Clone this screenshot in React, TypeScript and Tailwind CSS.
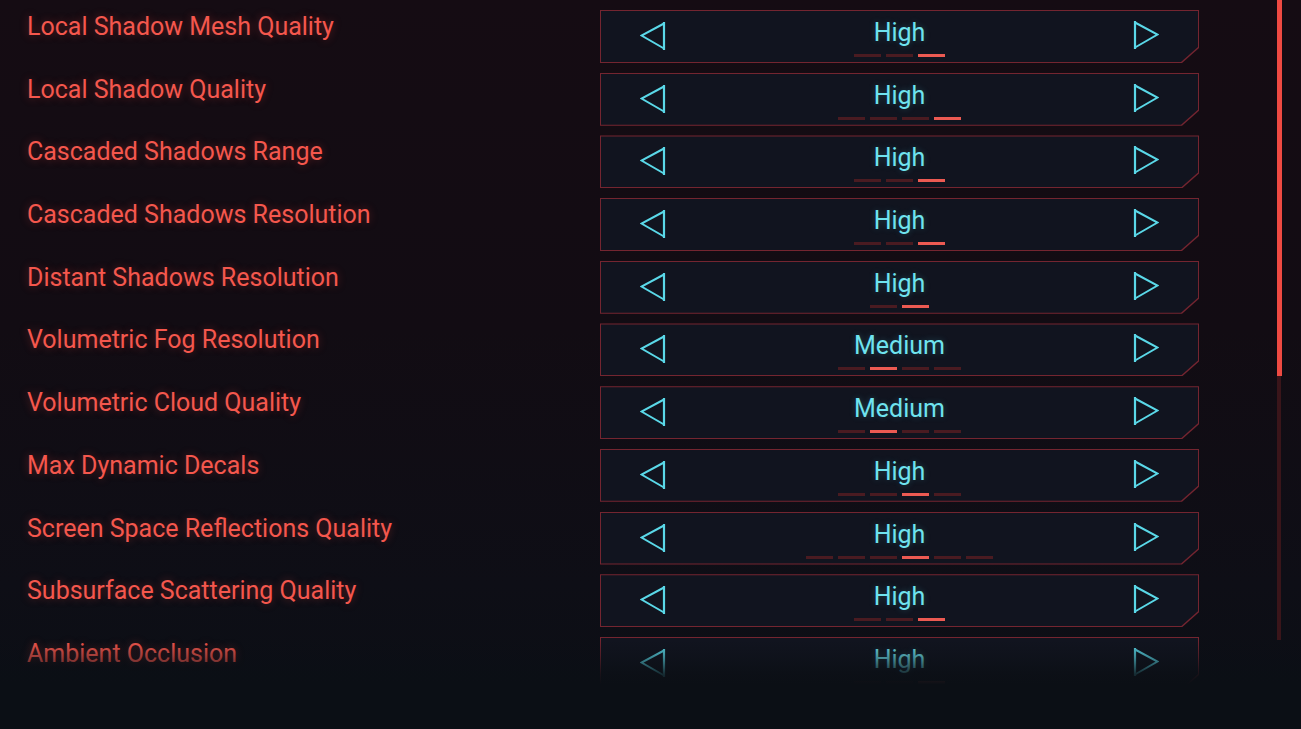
import React from "react";

type Row = { label: string; value: string; segs: number; active: number };

const rows: Row[] = [
  { label: "Local Shadow Mesh Quality", value: "High", segs: 3, active: 3 },
  { label: "Local Shadow Quality", value: "High", segs: 4, active: 4 },
  { label: "Cascaded Shadows Range", value: "High", segs: 3, active: 3 },
  { label: "Cascaded Shadows Resolution", value: "High", segs: 3, active: 3 },
  { label: "Distant Shadows Resolution", value: "High", segs: 2, active: 2 },
  { label: "Volumetric Fog Resolution", value: "Medium", segs: 4, active: 2 },
  { label: "Volumetric Cloud Quality", value: "Medium", segs: 4, active: 2 },
  { label: "Max Dynamic Decals", value: "High", segs: 4, active: 3 },
  { label: "Screen Space Reflections Quality", value: "High", segs: 6, active: 4 },
  { label: "Subsurface Scattering Quality", value: "High", segs: 3, active: 3 },
  { label: "Ambient Occlusion", value: "High", segs: 3, active: 3 },
];

function LeftArrow() {
  return (
    <svg width="26" height="30" viewBox="0 0 26 30" className="mt-[1px] shrink-0">
      <path d="M24 2.5 L1.5 14.5 L24 27.5" fill="none" stroke="#5ad8e8" strokeWidth="2" strokeLinejoin="miter" />
      <path d="M24 1 L24 29" stroke="#5ad8e8" strokeWidth="2.2" />
    </svg>
  );
}

function RightArrow() {
  return (
    <svg width="26" height="30" viewBox="0 0 26 30" className="shrink-0">
      <path d="M2 2.5 L24.5 14.5 L2 27.5" fill="none" stroke="#5ad8e8" strokeWidth="2" strokeLinejoin="miter" />
      <path d="M2 1 L2 29" stroke="#5ad8e8" strokeWidth="2.2" />
    </svg>
  );
}

function Selector({ row }: { row: Row }) {
  return (
    <div className="w-[599px] h-[53px] p-px bg-[#742530] [clip-path:polygon(0_0,100%_0,100%_calc(100%_-_15px),calc(100%_-_17px)_100%,0_100%)]">
      <div className="flex h-full w-full items-start justify-between px-[39px] pt-[9px] bg-[#11141f] [clip-path:polygon(0_0,100%_0,100%_calc(100%_-_15px),calc(100%_-_17px)_100%,0_100%)]">
        <LeftArrow />
        <div className="flex flex-col items-center">
          <div className="text-[25px] leading-[25px] text-[#6fe3ef] [text-shadow:0_0_6px_rgba(80,220,240,0.25)]">
            {row.value}
          </div>
          <div className="mt-[9px] flex h-[3px] gap-[5px]">
            {Array.from({ length: row.segs }).map((_, i) => (
              <div
                key={i}
                className={
                  i + 1 === row.active
                    ? "h-[3px] w-[27px] bg-[#ec5a52]"
                    : "h-[3px] w-[27px] bg-[#4a1b21]"
                }
              />
            ))}
          </div>
        </div>
        <RightArrow />
      </div>
    </div>
  );
}

export default function App() {
  return (
    <div className="relative h-[729px] w-[1301px] overflow-hidden bg-[linear-gradient(180deg,#150c13_0%,#120c13_45%,#0e0e16_80%,#0b0f15_100%)] font-['Roboto',sans-serif]">
      <div className="flex h-[685px]">
        <div className="flex w-[1199px] flex-col pt-[10px] pl-[27px]">
          {rows.map((row) => (
            <div key={row.label} className="flex h-[62.7px] shrink-0 items-start">
              <div className="w-[573px] pt-[4px] text-[25px] leading-[25px] text-[#f4574d] [text-shadow:0_0_8px_rgba(240,70,60,0.35)]">
                {row.label}
              </div>
              <Selector row={row} />
            </div>
          ))}
        </div>
        <div className="ml-[78px] flex w-[5px] flex-col">
          <div className="h-[376px] w-[5px] bg-[#ee4a42]" />
          <div className="h-[264px] w-[4px] bg-[#3a151a]" />
        </div>
      </div>
      <div className="pointer-events-none absolute left-0 right-0 top-[640px] h-[89px] bg-[linear-gradient(180deg,rgba(11,15,21,0)_0%,rgba(11,15,21,0.4)_20%,rgba(11,15,21,0.85)_38%,rgba(11,15,21,1)_50%,#0b0f15_100%)]" />
    </div>
  );
}
